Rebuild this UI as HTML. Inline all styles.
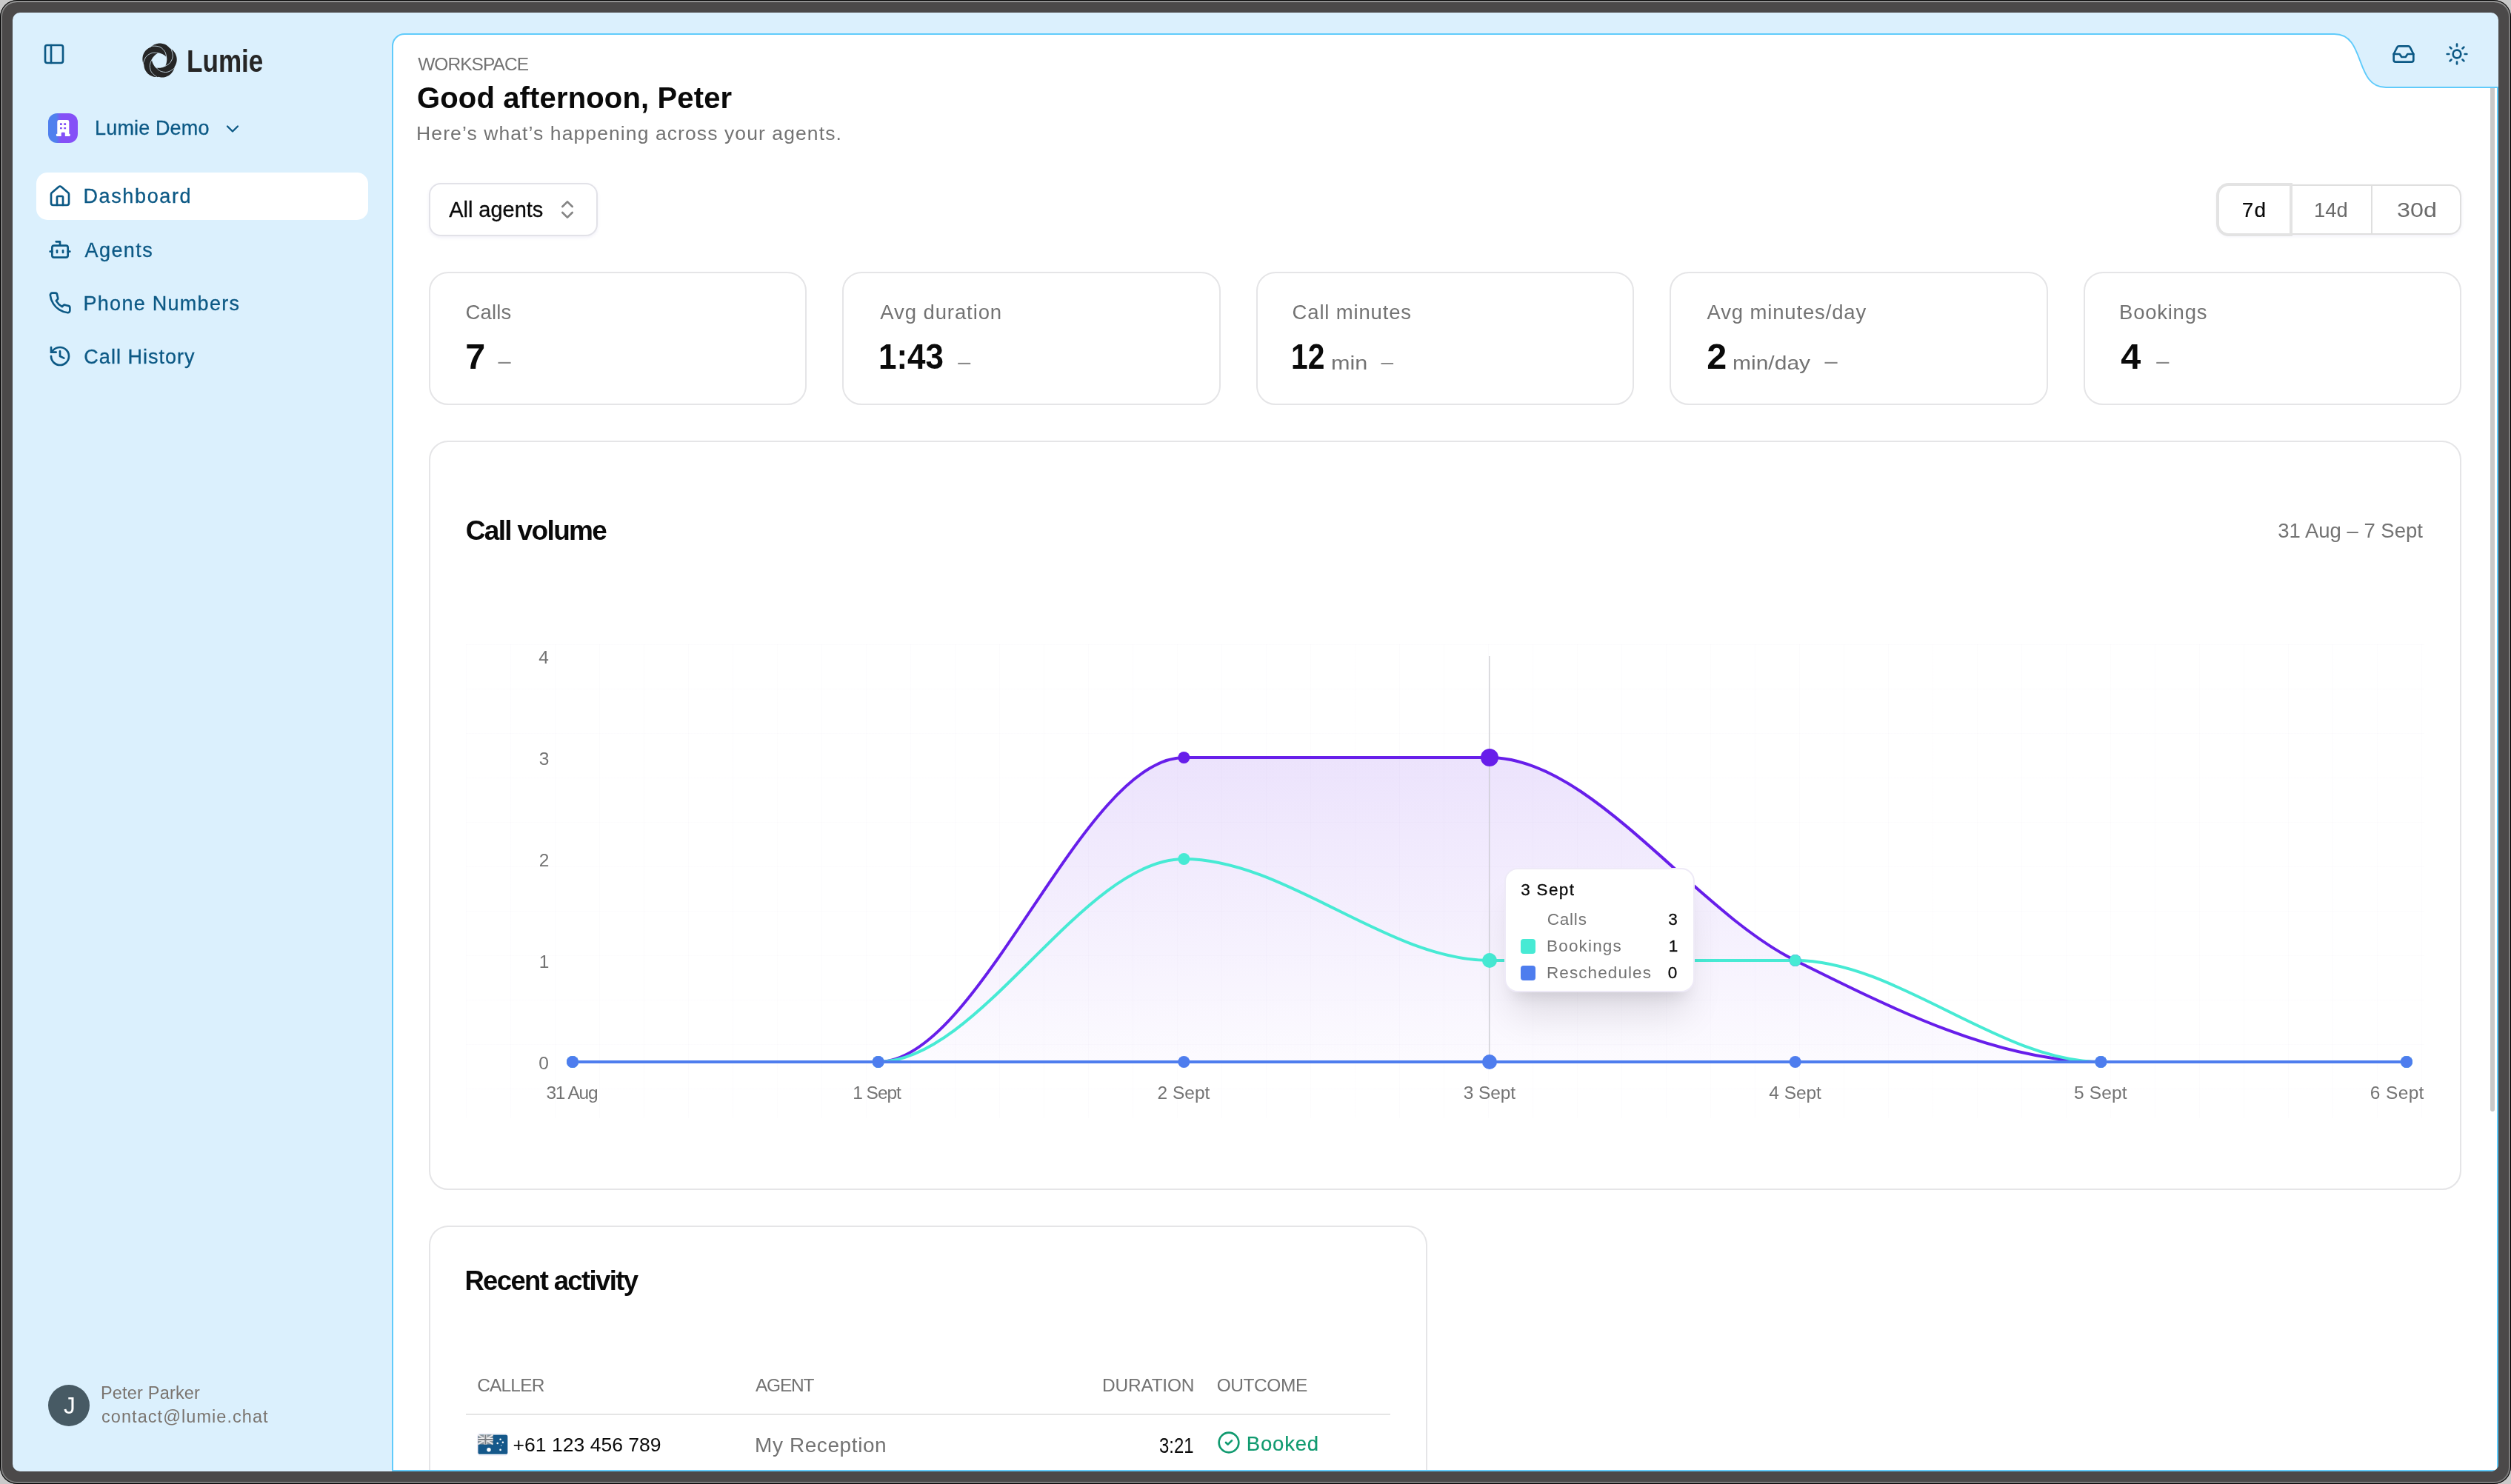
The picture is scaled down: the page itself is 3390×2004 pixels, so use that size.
<!DOCTYPE html>
<html lang="en"><head><meta charset="utf-8"><title>Lumie – Dashboard</title>
<style>
html,body{margin:0;padding:0}
body{width:3390px;height:2004px;overflow:hidden;background:#c9c9c9;font-family:"Liberation Sans",sans-serif;position:relative}
#frame{position:absolute;left:0;top:0;width:3390px;height:2004px;border-radius:23px;background:#4b4949;box-shadow:inset 0 0 0 1px #000,inset 0 3px 0 0 #929292,inset 0 0 0 3px #7c7c7c}
#clip{position:absolute;left:17px;top:17px;width:3356px;height:1970px;border-radius:10px;overflow:hidden;background:#dbf0fd}
#app{position:absolute;left:0;top:0;width:1678px;height:985px;zoom:2;overflow:hidden;will-change:transform}
.abs{position:absolute;display:block}
.t{position:absolute;white-space:pre;display:block}
.card{position:absolute;box-sizing:border-box;border:1px solid #e5e5e7;border-radius:13px;background:#fff}
</style></head><body>
<div id="frame"></div>
<div id="clip"><div id="app">
<!-- main panel -->
<svg class="abs" style="left:0;top:0" width="1678" height="985" viewBox="0 0 1678 985"><path d="M256.5,984.5 L256.5,22.5 A8,8 0 0 1 264.5,14.5 L1567.25,14.5 C1588.80,14.5 1580.45,50.50 1602.00,50.50 L1677.5,50.50 L1677.5,984.5 Z" fill="#fff" stroke="#60cbfb" stroke-width="1"/></svg>
<div class="abs" style="left:1672.5px;top:51px;width:3px;height:690.9px;border-radius:0 0 1.5px 1.5px;background:#c9c9c9"></div>
<!-- sidebar -->
<svg class="abs" style="left:20.00px;top:20.00px" width="16" height="16" viewBox="0 0 24 24" fill="none" stroke="#0c5985" stroke-width="2" stroke-linecap="round" stroke-linejoin="round" ><rect width="18" height="18" x="3" y="3" rx="2"/><path d="M9 3v18"/></svg>
<svg class="abs" style="left:86px;top:19px" width="26" height="26" viewBox="-26.4 -27.0 52 52">
<path d="M-10.81,-19.50L-9.85,-20.19L-8.84,-20.83L-7.79,-21.40L-6.70,-21.92L-5.58,-22.37L-4.42,-22.75L-3.24,-23.06L-2.04,-23.28L-0.82,-23.42L0.41,-23.48L1.64,-23.44L2.86,-23.32L4.07,-23.11L5.26,-22.80L6.43,-22.41L7.55,-21.94L8.64,-21.39L9.68,-20.75L10.66,-20.05L11.58,-19.28L12.44,-18.45L13.23,-17.56L13.95,-16.63L15.21,-16.31L16.16,-15.60L17.07,-14.84L17.95,-14.02L18.78,-13.15L19.56,-12.22L20.27,-11.24L20.93,-10.21L21.51,-9.13L22.02,-8.02L22.45,-6.86L22.80,-5.69L23.06,-4.48L23.23,-3.27L23.31,-2.04L23.30,-0.81L23.20,0.40L23.01,1.61L22.73,2.79L22.36,3.94L21.91,5.06L21.39,6.13L20.79,7.16L20.12,8.13L20.21,9.42L19.83,10.55L19.39,11.65L18.88,12.74L18.31,13.80L17.66,14.82L16.95,15.81L16.18,16.75L15.33,17.64L14.43,18.47L13.47,19.23L12.45,19.93L11.39,20.55L10.28,21.09L9.14,21.54L7.98,21.91L6.78,22.19L5.58,22.38L4.37,22.48L3.16,22.49L1.96,22.41L0.78,22.24L-0.38,21.98L-1.51,21.65L-2.72,22.13L-3.90,22.12L-5.09,22.04L-6.28,21.90L-7.46,21.68L-8.64,21.38L-9.80,21.01L-10.93,20.56L-12.04,20.03L-13.11,19.43L-14.13,18.75L-15.11,18.00L-16.02,17.18L-16.88,16.30L-17.66,15.35L-18.37,14.36L-19.01,13.31L-19.56,12.22L-20.03,11.10L-20.41,9.95L-20.70,8.79L-20.91,7.61L-21.03,6.43L-21.06,5.25L-21.89,4.26L-22.24,3.13L-22.54,1.97L-22.76,0.79L-22.92,-0.40L-23.00,-1.61L-23.01,-2.82L-22.93,-4.04L-22.77,-5.26L-22.53,-6.46L-22.20,-7.64L-21.79,-8.80L-21.29,-9.93L-20.72,-11.01L-20.06,-12.05L-19.33,-13.04L-18.53,-13.96L-17.67,-14.83L-16.75,-15.62L-15.77,-16.33L-14.76,-16.97L-13.70,-17.53L-12.61,-18.01L-11.50,-18.41ZM9.43,-5.67L9.57,-5.09L9.69,-4.52L9.77,-3.95L9.83,-3.38L9.87,-2.83L9.88,-2.28L9.88,-1.74L9.86,-1.21L9.83,-0.69L9.79,-0.17L9.74,0.34L9.68,0.85L9.60,1.35L9.52,1.85L9.43,2.35L9.33,2.85L9.21,3.35L9.07,3.85L8.92,4.35L8.74,4.85L8.54,5.34L8.31,5.82L8.06,6.30L8.30,7.22L7.80,7.53L7.29,7.82L6.77,8.07L6.26,8.30L5.74,8.51L5.22,8.69L4.71,8.86L4.20,9.00L3.69,9.14L3.19,9.26L2.69,9.37L2.18,9.46L1.68,9.55L1.18,9.63L0.68,9.70L0.17,9.75L-0.34,9.79L-0.86,9.82L-1.38,9.83L-1.91,9.81L-2.44,9.77L-2.97,9.71L-3.50,9.61L-4.30,10.13L-4.75,9.75L-5.18,9.35L-5.59,8.94L-5.96,8.52L-6.32,8.09L-6.65,7.65L-6.97,7.22L-7.27,6.78L-7.55,6.33L-7.82,5.89L-8.08,5.45L-8.33,5.00L-8.56,4.55L-8.79,4.10L-9.01,3.64L-9.22,3.18L-9.42,2.70L-9.60,2.22L-9.77,1.72L-9.92,1.22L-10.05,0.70L-10.15,0.18L-10.22,-0.36L-10.96,-0.96L-10.74,-1.51L-10.49,-2.04L-10.23,-2.55L-9.94,-3.04L-9.64,-3.51L-9.33,-3.96L-9.02,-4.40L-8.69,-4.82L-8.36,-5.22L-8.02,-5.62L-7.68,-6.00L-7.33,-6.37L-6.98,-6.74L-6.62,-7.10L-6.25,-7.45L-5.87,-7.79L-5.48,-8.12L-5.08,-8.45L-4.66,-8.76L-4.22,-9.06L-3.77,-9.34L-3.30,-9.60L-2.82,-9.83L-2.47,-10.72L-1.88,-10.68L-1.30,-10.61L-0.74,-10.51L-0.18,-10.40L0.36,-10.26L0.88,-10.10L1.40,-9.93L1.90,-9.75L2.38,-9.56L2.86,-9.36L3.33,-9.16L3.79,-8.94L4.25,-8.72L4.70,-8.49L5.15,-8.24L5.59,-7.99L6.03,-7.72L6.47,-7.44L6.89,-7.14L7.31,-6.82L7.72,-6.47L8.11,-6.11L8.48,-5.72Z" fill="#262626" fill-rule="evenodd"/><path d="M-11.01,-19.85C-10.37,-19.85 -8.77,-19.92 -7.22,-19.83C-5.66,-19.74 -3.35,-19.77 -1.69,-19.33C-0.03,-18.89 1.30,-18.26 2.72,-17.19C4.15,-16.11 5.90,-14.24 6.85,-12.89C7.81,-11.54 8.08,-10.31 8.46,-9.07C8.83,-7.83 8.98,-6.06 9.09,-5.46" fill="none" stroke="#dbf0fd" stroke-opacity="0.85" stroke-width="0.95" stroke-linecap="round"/><path d="M15.48,-16.60C15.67,-16.00 16.23,-14.49 16.63,-12.99C17.02,-11.49 17.76,-9.29 17.86,-7.58C17.95,-5.87 17.77,-4.41 17.19,-2.72C16.61,-1.04 15.37,1.21 14.38,2.54C13.39,3.86 12.30,4.50 11.24,5.24C10.18,5.98 8.54,6.67 8.00,6.95" fill="none" stroke="#dbf0fd" stroke-opacity="0.85" stroke-width="0.95" stroke-linecap="round"/><path d="M20.57,9.59C20.06,9.96 18.80,10.96 17.49,11.80C16.19,12.64 14.33,14.02 12.73,14.64C11.13,15.26 9.68,15.53 7.90,15.50C6.12,15.47 3.60,14.99 2.03,14.46C0.46,13.93 -0.48,13.09 -1.51,12.31C-2.54,11.52 -3.70,10.18 -4.14,9.76" fill="none" stroke="#dbf0fd" stroke-opacity="0.85" stroke-width="0.95" stroke-linecap="round"/><path d="M-2.77,22.53C-3.27,22.16 -4.61,21.27 -5.82,20.28C-7.02,19.30 -8.91,17.96 -9.99,16.63C-11.07,15.30 -11.78,14.01 -12.30,12.30C-12.83,10.60 -13.14,8.06 -13.12,6.40C-13.10,4.74 -12.60,3.59 -12.17,2.37C-11.75,1.15 -10.83,-0.38 -10.56,-0.92" fill="none" stroke="#dbf0fd" stroke-opacity="0.85" stroke-width="0.95" stroke-linecap="round"/><path d="M-22.28,4.33C-22.08,3.73 -21.65,2.19 -21.09,0.74C-20.52,-0.71 -19.83,-2.92 -18.90,-4.36C-17.97,-5.80 -16.96,-6.88 -15.50,-7.90C-14.04,-8.92 -11.72,-10.01 -10.14,-10.50C-8.56,-10.99 -7.30,-10.87 -6.01,-10.85C-4.72,-10.82 -2.99,-10.41 -2.38,-10.33" fill="none" stroke="#dbf0fd" stroke-opacity="0.85" stroke-width="0.95" stroke-linecap="round"/></svg>
<div class="abs" style="left:24px;top:68px;width:20px;height:20px;border-radius:6px;background:linear-gradient(90deg,#4f80ee 0%,#4f80ee 27%,#8550f7 44%,#8550f7 100%)"></div>
<svg class="abs" style="left:24px;top:68px" width="20" height="20" viewBox="0 0 20 20"><path fill="#fff" fill-rule="evenodd" d="M6.15 5.7 a1.2 1.2 0 0 1 1.2-1.2 h5.6 a1.2 1.2 0 0 1 1.2 1.2 V13.9 h.3 a.4.4 0 0 1 .4.4 v.75 a.4.4 0 0 1-.4.4 H11.4 V13.45 a.6.6 0 0 0-.6-.6 H9.45 a.6.6 0 0 0-.6.6 V15.45 H5.85 a.4.4 0 0 1-.4-.4 v-.75 a.4.4 0 0 1 .4-.4 h.3 Z M8 6.6 h1.4 v1.4 H8 Z M10.6 6.6 h1.45 v1.4 H10.6 Z M8 9.45 h1.4 v1.2 H8 Z M10.6 9.45 h1.45 v1.2 H10.6 Z"/></svg>
<svg class="abs" style="left:141.50px;top:71.45px" width="14" height="14" viewBox="0 0 24 24" fill="none" stroke="#0c5985" stroke-width="2" stroke-linecap="round" stroke-linejoin="round" ><path d="m6 9 6 6 6-6"/></svg>
<div class="abs" style="left:16px;top:108px;width:224px;height:32px;border-radius:7.5px;background:#fff"></div>
<svg class="abs" style="left:24.00px;top:116.00px" width="16" height="16" viewBox="0 0 24 24" fill="none" stroke="#0c5985" stroke-width="2" stroke-linecap="round" stroke-linejoin="round" ><path d="M15 21v-8a1 1 0 0 0-1-1h-4a1 1 0 0 0-1 1v8"/><path d="M3 10a2 2 0 0 1 .709-1.528l7-5.999a2 2 0 0 1 2.582 0l7 5.999A2 2 0 0 1 21 10v9a2 2 0 0 1-2 2H5a2 2 0 0 1-2-2z"/></svg>
<svg class="abs" style="left:24.00px;top:152.00px" width="16" height="16" viewBox="0 0 24 24" fill="none" stroke="#0c5985" stroke-width="2" stroke-linecap="round" stroke-linejoin="round" ><path d="M12 8V4H8"/><rect width="16" height="12" x="4" y="8" rx="2"/><path d="M2 14h2"/><path d="M20 14h2"/><path d="M15 13v2"/><path d="M9 13v2"/></svg>
<svg class="abs" style="left:24.00px;top:188.00px" width="16" height="16" viewBox="0 0 24 24" fill="none" stroke="#0c5985" stroke-width="2" stroke-linecap="round" stroke-linejoin="round" ><path d="M22 16.92v3a2 2 0 0 1-2.18 2 19.79 19.79 0 0 1-8.63-3.07 19.5 19.5 0 0 1-6-6 19.79 19.79 0 0 1-3.07-8.67A2 2 0 0 1 4.11 2h3a2 2 0 0 1 2 1.72 12.84 12.84 0 0 0 .7 2.81 2 2 0 0 1-.45 2.11L8.09 9.91a16 16 0 0 0 6 6l1.27-1.27a2 2 0 0 1 2.11-.45 12.84 12.84 0 0 0 2.81.7A2 2 0 0 1 22 16.92z"/></svg>
<svg class="abs" style="left:24.00px;top:224.00px" width="16" height="16" viewBox="0 0 24 24" fill="none" stroke="#0c5985" stroke-width="2" stroke-linecap="round" stroke-linejoin="round" ><path d="M3 12a9 9 0 1 0 9-9 9.75 9.75 0 0 0-6.74 2.74L3 8"/><path d="M3 3v5h5"/><path d="M12 7v5l4 2"/></svg>
<div class="abs" style="left:24.05px;top:926.5px;width:28px;height:28px;border-radius:50%;background:#475a64"></div>
<!-- header right icons -->
<svg class="abs" style="left:1606.10px;top:20.00px" width="16" height="16" viewBox="0 0 24 24" fill="none" stroke="#0c5985" stroke-width="2" stroke-linecap="round" stroke-linejoin="round" ><polyline points="22 12 16 12 14 15 10 15 8 12 2 12"/><path d="M5.45 5.11 2 12v6a2 2 0 0 0 2 2h16a2 2 0 0 0 2-2v-6l-3.45-6.89A2 2 0 0 0 16.76 4H7.24a2 2 0 0 0-1.79 1.11z"/></svg>
<svg class="abs" style="left:1642.00px;top:20.00px" width="16" height="16" viewBox="0 0 24 24" fill="none" stroke="#0c5985" stroke-width="2" stroke-linecap="round" stroke-linejoin="round" ><circle cx="12" cy="12" r="4"/><path d="M12 2v2"/><path d="M12 20v2"/><path d="m4.93 4.93 1.41 1.41"/><path d="m17.66 17.66 1.41 1.41"/><path d="M2 12h2"/><path d="M20 12h2"/><path d="m6.34 17.66-1.41 1.41"/><path d="m19.07 4.93-1.41 1.41"/></svg>
<!-- controls -->
<div class="abs" style="left:281px;top:115px;width:114px;height:36px;box-sizing:border-box;border:1px solid #e2e2e8;border-radius:8px;background:#fff;box-shadow:0 1px 2px rgba(80,60,160,0.08)"></div>
<svg class="abs" style="left:366.45px;top:125.00px" width="16" height="16" viewBox="0 0 24 24" fill="none" stroke="#858585" stroke-width="2" stroke-linecap="round" stroke-linejoin="round" ><path d="m7 15 5 5 5-5"/><path d="m7 9 5-5 5 5"/></svg>
<div class="abs" style="left:1488px;top:116px;width:165px;height:34px;box-sizing:border-box;border:1px solid #dfdfdf;border-radius:8px;background:#fff;box-shadow:0 1px 2px rgba(80,60,160,0.08)"></div>
<div class="abs" style="left:1592px;top:116px;width:1px;height:34px;background:#dfdfdf"></div>
<div class="abs" style="left:1487.5px;top:115px;width:51.5px;height:36px;box-sizing:border-box;border:2px solid #e3e3e3;border-radius:8.5px 0 0 8.5px;background:#fff"></div>
<!-- stat cards -->
<div class="card" style="left:281.00px;top:175px;width:255.2px;height:90px"></div><div class="card" style="left:560.20px;top:175px;width:255.2px;height:90px"></div><div class="card" style="left:839.40px;top:175px;width:255.2px;height:90px"></div><div class="card" style="left:1118.60px;top:175px;width:255.2px;height:90px"></div><div class="card" style="left:1397.80px;top:175px;width:255.2px;height:90px"></div>
<!-- chart card -->
<div class="card" style="left:281px;top:289px;width:1372px;height:506px"></div>
<div class="abs" style="left:306.00px;top:426.25px;width:1322.00px;height:320.00px;background-image:linear-gradient(to right,rgba(70,50,140,0.014) 0.5px,transparent 0.5px),linear-gradient(to bottom,rgba(70,50,140,0.014) 0.5px,transparent 0.5px);background-size:30px 30px"></div>
<svg class="abs" style="left:0;top:0" width="1678" height="985" viewBox="0 0 1678 985">
<defs><linearGradient id="ga" x1="0" y1="0" x2="0" y2="1"><stop offset="0" stop-color="#671eea" stop-opacity="0.125"/><stop offset="1" stop-color="#671eea" stop-opacity="0.02"/></linearGradient></defs>
<path d="M378.00,708.50C446.78,708.50 515.56,708.50 584.33,708.50C653.11,708.50 721.89,503.00 790.67,503.00C859.44,503.00 928.22,503.00 997.00,503.00C1065.78,503.00 1134.56,605.75 1203.33,640.00C1272.11,674.25 1340.89,708.50 1409.67,708.50C1478.44,708.50 1547.22,708.50 1616.00,708.50L1616.00,708.50L378.00,708.50Z" fill="url(#ga)"/>
<line x1="996.90" x2="996.90" y1="434.50" y2="708.50" stroke="#c9c9ce" stroke-width="0.6"/>
<path d="M378.00,708.50C446.78,708.50 515.56,708.50 584.33,708.50C653.11,708.50 721.89,503.00 790.67,503.00C859.44,503.00 928.22,503.00 997.00,503.00C1065.78,503.00 1134.56,605.75 1203.33,640.00C1272.11,674.25 1340.89,708.50 1409.67,708.50C1478.44,708.50 1547.22,708.50 1616.00,708.50" fill="none" stroke="#671eea" stroke-width="2"/>
<path d="M378.00,708.50C446.78,708.50 515.56,708.50 584.33,708.50C653.11,708.50 721.89,571.50 790.67,571.50C859.44,571.50 928.22,640.00 997.00,640.00C1065.78,640.00 1134.56,640.00 1203.33,640.00C1272.11,640.00 1340.89,708.50 1409.67,708.50C1478.44,708.50 1547.22,708.50 1616.00,708.50" fill="none" stroke="#47ead4" stroke-width="2"/>
<path d="M378.00,708.50C446.78,708.50 515.56,708.50 584.33,708.50C653.11,708.50 721.89,708.50 790.67,708.50C859.44,708.50 928.22,708.50 997.00,708.50C1065.78,708.50 1134.56,708.50 1203.33,708.50C1272.11,708.50 1340.89,708.50 1409.67,708.50C1478.44,708.50 1547.22,708.50 1616.00,708.50" fill="none" stroke="#4e7dee" stroke-width="2"/>
<circle cx="378.00" cy="708.50" r="4" fill="#671eea"/><circle cx="378.00" cy="708.50" r="4" fill="#47ead4"/><circle cx="378.00" cy="708.50" r="4" fill="#4e7dee"/><circle cx="584.33" cy="708.50" r="4" fill="#671eea"/><circle cx="584.33" cy="708.50" r="4" fill="#47ead4"/><circle cx="584.33" cy="708.50" r="4" fill="#4e7dee"/><circle cx="790.67" cy="503.00" r="4" fill="#671eea"/><circle cx="790.67" cy="571.50" r="4" fill="#47ead4"/><circle cx="790.67" cy="708.50" r="4" fill="#4e7dee"/><circle cx="997.00" cy="503.00" r="6" fill="#671eea"/><circle cx="997.00" cy="640.00" r="5" fill="#47ead4"/><circle cx="997.00" cy="708.50" r="5" fill="#4e7dee"/><circle cx="1203.33" cy="640.00" r="4" fill="#671eea"/><circle cx="1203.33" cy="640.00" r="4" fill="#47ead4"/><circle cx="1203.33" cy="708.50" r="4" fill="#4e7dee"/><circle cx="1409.67" cy="708.50" r="4" fill="#671eea"/><circle cx="1409.67" cy="708.50" r="4" fill="#47ead4"/><circle cx="1409.67" cy="708.50" r="4" fill="#4e7dee"/><circle cx="1616.00" cy="708.50" r="4" fill="#671eea"/><circle cx="1616.00" cy="708.50" r="4" fill="#47ead4"/><circle cx="1616.00" cy="708.50" r="4" fill="#4e7dee"/>
</svg>
<!-- tooltip -->
<div class="abs" style="left:1006.90px;top:577.50px;width:128.55px;height:83.75px;box-sizing:border-box;border:1px solid #eeeaf7;border-radius:9px;background:#fff;box-shadow:0 20px 25px -5px rgba(0,0,0,0.10),0 8px 10px -6px rgba(0,0,0,0.10)"></div>
<div class="abs" style="left:1017.95px;top:625.50px;width:10px;height:10px;border-radius:2px;background:#47ead4"></div>
<div class="abs" style="left:1017.95px;top:643.45px;width:10px;height:10px;border-radius:2px;background:#4e7dee"></div>
<!-- recent activity card -->
<div class="card" style="left:281px;top:819px;width:674px;height:165px;border-bottom:none;border-radius:13px 13px 0 0"></div>
<div class="abs" style="left:306px;top:946px;width:624px;height:1px;background:#e5e5e5"></div>
<svg class="abs" style="left:313.30px;top:959.10px" width="21" height="15.5" viewBox="0 0 42 31"><rect x="0.4" y="0.4" width="41.4" height="30.2" rx="4.5" fill="#fff" stroke="#efeaf8" stroke-width="0.8"/><rect x="1.4" y="2.6" width="39.9" height="26.2" rx="2.6" fill="#15588a"/><g><path d="M1.4 5.2 a2.6 2.6 0 0 1 2.6-2.6 H21.5 V15.4 H1.4 Z" fill="#8c959d"/><path d="M2 3 21.5 15.4M21.5 2.6 1.4 15.4" stroke="#e6e6e6" stroke-width="2"/><path d="M11.4 2.6v12.8M1.4 9h20.1" stroke="#f2f2f2" stroke-width="4.2"/><path d="M11.4 2.6v12.8M1.4 9h20.1" stroke="#7c7f83" stroke-width="2"/></g><g fill="#fff"><circle cx="15.95" cy="22.7" r="2.7"/><circle cx="31.56" cy="8.8" r="1.25"/><circle cx="34.9" cy="12.7" r="1.25"/><circle cx="27.66" cy="14" r="1.25"/><circle cx="31.56" cy="22.9" r="1.3"/><circle cx="32.7" cy="16.9" r="0.7"/></g></svg>
<svg class="abs" style="left:813.00px;top:957.45px" width="16" height="16" viewBox="0 0 24 24" fill="none" stroke="#109a6f" stroke-width="2" stroke-linecap="round" stroke-linejoin="round" ><circle cx="12" cy="12" r="10"/><path d="m9 12 2 2 4-4"/></svg>
<!-- text -->
<span class="t" id="logo" style="left:117.30px;top:22.47px;font-size:21.00px;line-height:21.00px;color:#262626;font-weight:700;transform:scaleX(0.8358);transform-origin:0 0;">Lumie</span>
<span class="t" id="ws" style="left:55.55px;top:71.57px;font-size:13.50px;line-height:13.50px;color:#0c5985;letter-spacing:0.069px;-webkit-text-stroke:0.15px #0c5985;">Lumie Demo</span>
<span class="t" id="n1" style="left:47.75px;top:117.67px;font-size:13.50px;line-height:13.50px;color:#0c5985;letter-spacing:0.809px;-webkit-text-stroke:0.15px #0c5985;">Dashboard</span>
<span class="t" id="n2" style="left:48.80px;top:153.77px;font-size:13.50px;line-height:13.50px;color:#0c5985;letter-spacing:0.699px;-webkit-text-stroke:0.15px #0c5985;">Agents</span>
<span class="t" id="n3" style="left:47.75px;top:189.82px;font-size:13.50px;line-height:13.50px;color:#0c5985;letter-spacing:0.640px;-webkit-text-stroke:0.15px #0c5985;">Phone Numbers</span>
<span class="t" id="n4" style="left:48.17px;top:225.77px;font-size:13.50px;line-height:13.50px;color:#0c5985;letter-spacing:0.511px;-webkit-text-stroke:0.15px #0c5985;">Call History</span>
<span class="t" id="av" style="left:34.48px;top:933.02px;font-size:15.75px;line-height:15.75px;color:#ffffff;">J</span>
<span class="t" id="un" style="left:59.48px;top:926.45px;font-size:11.75px;line-height:11.75px;color:#7a746f;letter-spacing:0.093px;">Peter Parker</span>
<span class="t" id="ue" style="left:60.03px;top:942.65px;font-size:11.75px;line-height:11.75px;color:#7a746f;letter-spacing:0.524px;">contact@lumie.chat</span>
<span class="t" id="h0" style="left:273.60px;top:29.08px;font-size:12.25px;line-height:12.25px;color:#737373;letter-spacing:-0.477px;">WORKSPACE</span>
<span class="t" id="h1" style="left:272.98px;top:47.52px;font-size:20.00px;line-height:20.00px;color:#0a0a0a;font-weight:700;letter-spacing:0.074px;">Good afternoon, Peter</span>
<span class="t" id="h2" style="left:272.56px;top:74.88px;font-size:13.25px;line-height:13.25px;color:#737373;letter-spacing:0.546px;">Here’s what’s happening across your agents.</span>
<span class="t" id="sel" style="left:294.60px;top:126.23px;font-size:14.50px;line-height:14.50px;color:#0a0a0a;letter-spacing:-0.014px;-webkit-text-stroke:0.15px #0a0a0a;">All agents</span>
<span class="t" id="t7" style="left:1504.84px;top:126.50px;font-size:14.00px;line-height:14.00px;color:#0a0a0a;letter-spacing:0.570px;-webkit-text-stroke:0.1px #0a0a0a;">7d</span>
<span class="t" id="t14" style="left:1553.25px;top:126.50px;font-size:14.00px;line-height:14.00px;color:#6b6b6b;transform:scaleX(0.9771);transform-origin:0 0;">14d</span>
<span class="t" id="t30" style="left:1609.30px;top:126.50px;font-size:14.00px;line-height:14.00px;color:#6b6b6b;transform:scaleX(1.1520);transform-origin:0 0;">30d</span>
<span class="t" id="s1l" style="left:305.71px;top:195.56px;font-size:13.75px;line-height:13.75px;color:#737373;letter-spacing:0.091px;">Calls</span>
<span class="t" id="s2l" style="left:585.65px;top:195.56px;font-size:13.75px;line-height:13.75px;color:#737373;letter-spacing:0.452px;">Avg duration</span>
<span class="t" id="s3l" style="left:863.81px;top:195.56px;font-size:13.75px;line-height:13.75px;color:#737373;letter-spacing:0.416px;">Call minutes</span>
<span class="t" id="s4l" style="left:1143.80px;top:195.56px;font-size:13.75px;line-height:13.75px;color:#737373;letter-spacing:0.421px;">Avg minutes/day</span>
<span class="t" id="s5l" style="left:1422.03px;top:195.56px;font-size:13.75px;line-height:13.75px;color:#737373;letter-spacing:0.377px;">Bookings</span>
<span class="t" id="s1v" style="left:305.59px;top:220.22px;font-size:24.25px;line-height:24.25px;color:#0a0a0a;font-weight:700;">7</span>
<span class="t" id="s2v" style="left:584.28px;top:220.22px;font-size:24.25px;line-height:24.25px;color:#0a0a0a;font-weight:700;transform:scaleX(0.9070);transform-origin:0 0;">1:43</span>
<span class="t" id="s3v" style="left:863.18px;top:220.22px;font-size:24.25px;line-height:24.25px;color:#0a0a0a;font-weight:700;transform:scaleX(0.8409);transform-origin:0 0;">12</span>
<span class="t" id="s3u" style="left:889.99px;top:229.75px;font-size:13.00px;line-height:13.00px;color:#737373;transform:scaleX(1.1775);transform-origin:0 0;">min</span>
<span class="t" id="s4v" style="left:1143.59px;top:220.22px;font-size:24.25px;line-height:24.25px;color:#0a0a0a;font-weight:700;">2</span>
<span class="t" id="s4u" style="left:1160.96px;top:229.75px;font-size:13.00px;line-height:13.00px;color:#737373;transform:scaleX(1.1542);transform-origin:0 0;">min/day</span>
<span class="t" id="s5v" style="left:1423.10px;top:220.22px;font-size:24.25px;line-height:24.25px;color:#0a0a0a;font-weight:700;">4</span>
<span class="t" id="cv" style="left:305.87px;top:340.34px;font-size:18.50px;line-height:18.50px;color:#0a0a0a;font-weight:700;letter-spacing:-0.825px;">Call volume</span>
<span class="t" id="cr" style="left:1529.17px;top:343.21px;font-size:13.75px;line-height:13.75px;color:#737373;letter-spacing:-0.006px;">31 Aug – 7 Sept</span>
<span class="t" id="ra" style="left:305.21px;top:847.50px;font-size:18.25px;line-height:18.25px;color:#0a0a0a;font-weight:700;letter-spacing:-0.825px;">Recent activity</span>
<span class="t" id="th1" style="left:313.58px;top:920.88px;font-size:12.25px;line-height:12.25px;color:#737373;letter-spacing:-0.412px;">CALLER</span>
<span class="t" id="th2" style="left:501.50px;top:920.88px;font-size:12.25px;line-height:12.25px;color:#737373;letter-spacing:-0.610px;">AGENT</span>
<span class="t" id="th3" style="left:735.54px;top:920.88px;font-size:12.25px;line-height:12.25px;color:#737373;letter-spacing:-0.129px;">DURATION</span>
<span class="t" id="th4" style="left:812.83px;top:920.88px;font-size:12.25px;line-height:12.25px;color:#737373;letter-spacing:-0.212px;">OUTCOME</span>
<span class="t" id="r1a" style="left:337.78px;top:960.63px;font-size:13.25px;line-height:13.25px;color:#0a0a0a;letter-spacing:0.012px;">+61 123 456 789</span>
<span class="t" id="r1b" style="left:501.01px;top:960.50px;font-size:14.00px;line-height:14.00px;color:#737373;letter-spacing:0.294px;">My Reception</span>
<span class="t" id="r1c" style="left:773.93px;top:960.33px;font-size:14.50px;line-height:14.50px;color:#0a0a0a;transform:scaleX(0.8260);transform-origin:0 0;">3:21</span>
<span class="t" id="r1d" style="left:832.93px;top:959.31px;font-size:13.75px;line-height:13.75px;color:#109a6f;letter-spacing:0.402px;-webkit-text-stroke:0.1px #109a6f;">Booked</span>
<span class="t" id="tt0" style="left:1018.10px;top:586.93px;font-size:11.25px;line-height:11.25px;color:#0a0a0a;letter-spacing:0.668px;-webkit-text-stroke:0.15px #0a0a0a;">3 Sept</span>
<span class="t" id="tt1" style="left:1035.87px;top:606.93px;font-size:11.25px;line-height:11.25px;color:#737373;letter-spacing:0.394px;">Calls</span>
<span class="t" id="tt1v" style="left:1117.60px;top:606.93px;font-size:11.25px;line-height:11.25px;color:#0a0a0a;-webkit-text-stroke:0.15px #0a0a0a;">3</span>
<span class="t" id="tt2" style="left:1035.52px;top:625.23px;font-size:11.25px;line-height:11.25px;color:#737373;letter-spacing:0.586px;">Bookings</span>
<span class="t" id="tt2v" style="left:1117.90px;top:625.23px;font-size:11.25px;line-height:11.25px;color:#0a0a0a;-webkit-text-stroke:0.15px #0a0a0a;">1</span>
<span class="t" id="tt3" style="left:1035.52px;top:643.08px;font-size:11.25px;line-height:11.25px;color:#737373;letter-spacing:0.539px;">Reschedules</span>
<span class="t" id="tt3v" style="left:1117.42px;top:643.08px;font-size:11.25px;line-height:11.25px;color:#0a0a0a;-webkit-text-stroke:0.15px #0a0a0a;">0</span>
<span class="t" id="d1" style="left:327.75px;top:228.05px;font-size:15.38px;line-height:15.38px;color:#8a8a8a;">–</span>
<span class="t" id="d2" style="left:638.10px;top:228.10px;font-size:15.29px;line-height:15.29px;color:#8a8a8a;">–</span>
<span class="t" id="d3" style="left:923.80px;top:228.31px;font-size:14.93px;line-height:14.93px;color:#8a8a8a;">–</span>
<span class="t" id="d4" style="left:1223.25px;top:228.05px;font-size:15.38px;line-height:15.38px;color:#8a8a8a;">–</span>
<span class="t" id="d5" style="left:1447.10px;top:228.05px;font-size:15.38px;line-height:15.38px;color:#8a8a8a;">–</span>
<span class="t" id="y0" style="left:355.14px;top:703.63px;font-size:12.25px;line-height:12.25px;color:#737373;">0</span>
<span class="t" id="y1" style="left:355.33px;top:635.13px;font-size:12.25px;line-height:12.25px;color:#737373;">1</span>
<span class="t" id="y2" style="left:355.33px;top:566.63px;font-size:12.25px;line-height:12.25px;color:#737373;">2</span>
<span class="t" id="y3" style="left:355.33px;top:498.13px;font-size:12.25px;line-height:12.25px;color:#737373;">3</span>
<span class="t" id="y4" style="left:355.14px;top:429.63px;font-size:12.25px;line-height:12.25px;color:#737373;">4</span>
<span class="t" id="x0" style="left:360.22px;top:723.43px;font-size:12.25px;line-height:12.25px;color:#737373;letter-spacing:-0.621px;">31 Aug</span>
<span class="t" id="x1" style="left:567.13px;top:723.43px;font-size:12.25px;line-height:12.25px;color:#737373;letter-spacing:-0.518px;">1 Sept</span>
<span class="t" id="x2" style="left:772.78px;top:723.43px;font-size:12.25px;line-height:12.25px;color:#737373;">2 Sept</span>
<span class="t" id="x3" style="left:979.32px;top:723.43px;font-size:12.25px;line-height:12.25px;color:#737373;letter-spacing:-0.035px;">3 Sept</span>
<span class="t" id="x4" style="left:1185.66px;top:723.43px;font-size:12.25px;line-height:12.25px;color:#737373;letter-spacing:-0.023px;">4 Sept</span>
<span class="t" id="x5" style="left:1391.52px;top:723.43px;font-size:12.25px;line-height:12.25px;color:#737373;letter-spacing:0.065px;">5 Sept</span>
<span class="t" id="x6" style="left:1591.43px;top:723.43px;font-size:12.25px;line-height:12.25px;color:#737373;letter-spacing:0.173px;">6 Sept</span>
</div></div>
</body></html>
